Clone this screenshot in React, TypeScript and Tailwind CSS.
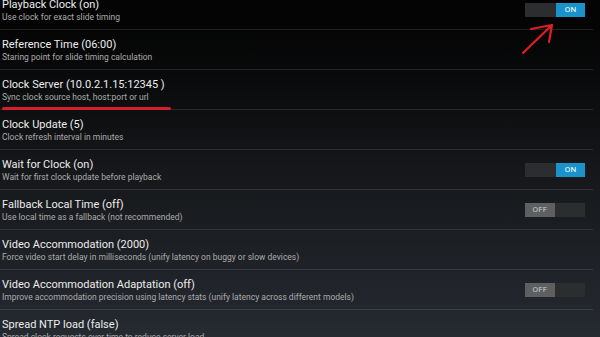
type Setting = {
  title: string
  hint: string
  toggle?: 'on' | 'off'
  marked?: boolean
}

const settings: Setting[] = [
  { title: 'Playback Clock (on)', hint: 'Use clock for exact slide timing', toggle: 'on' },
  { title: 'Reference Time (06:00)', hint: 'Staring point for slide timing calculation' },
  { title: 'Clock Server (10.0.2.1.15:12345 )', hint: 'Sync clock source host, host:port or url', marked: true },
  { title: 'Clock Update (5)', hint: 'Clock refresh interval in minutes' },
  { title: 'Wait for Clock (on)', hint: 'Wait for first clock update before playback', toggle: 'on' },
  { title: 'Fallback Local Time (off)', hint: 'Use local time as a fallback (not recommended)', toggle: 'off' },
  { title: 'Video Accommodation (2000)', hint: 'Force video start delay in milliseconds (unify latency on buggy or slow devices)' },
  {
    title: 'Video Accommodation Adaptation (off)',
    hint: 'Improve accommodation precision using latency stats (unify latency across different models)',
    toggle: 'off',
  },
  { title: 'Spread NTP load (false)', hint: 'Spread clock requests over time to reduce server load' },
]

function Toggle({ on }: { on: boolean }) {
  return (
    <div className="flex w-[60px] h-[14px] bg-[#2c2d2f] text-[8px] leading-[14px] tracking-wide">
      {on ? (
        <>
          <div className="w-[31px]" />
          <div className="w-[29px] bg-[#1a93cb] text-white text-center">ON</div>
        </>
      ) : (
        <div className="w-[30px] bg-[#5e5f61] text-[#c9c9c9] text-center">OFF</div>
      )}
    </div>
  )
}

export default function App() {
  return (
    <div
      className="relative w-[600px] h-[337px] overflow-hidden bg-gradient-to-b from-[#030303] via-[#15171a] to-[#262a31]"
      style={{ fontFamily: 'Roboto, "Liberation Sans", sans-serif' }}
    >
      <div className="-mt-[10px] mr-[7px]">
        {settings.map((s) => (
          <div
            key={s.title}
            className="relative flex items-center justify-between h-[40px] border-b border-white/[0.11] pl-[2px] pr-[8px]"
          >
            <div className="pt-[1px] whitespace-nowrap">
              <div className="text-[11px] leading-[14px] text-[#ececec]">{s.title}</div>
              <div className="text-[8.5px] leading-[11px] text-[#ababab]">{s.hint}</div>
            </div>
            {s.toggle && <Toggle on={s.toggle === 'on'} />}
            {s.marked && (
              <div className="absolute left-[2px] bottom-[-1px] w-[169px] h-[3px] rounded-full bg-[#d71f2b]" />
            )}
          </div>
        ))}
      </div>

      {/* annotation arrow */}
      <svg className="absolute left-0 top-0" width="600" height="337" fill="none">
        <path
          d="M523 53 L552 25 M531 29 L552 25 L549 42"
          stroke="#e11d24"
          strokeWidth="2.2"
          strokeLinecap="round"
          strokeLinejoin="round"
        />
      </svg>
    </div>
  )
}
